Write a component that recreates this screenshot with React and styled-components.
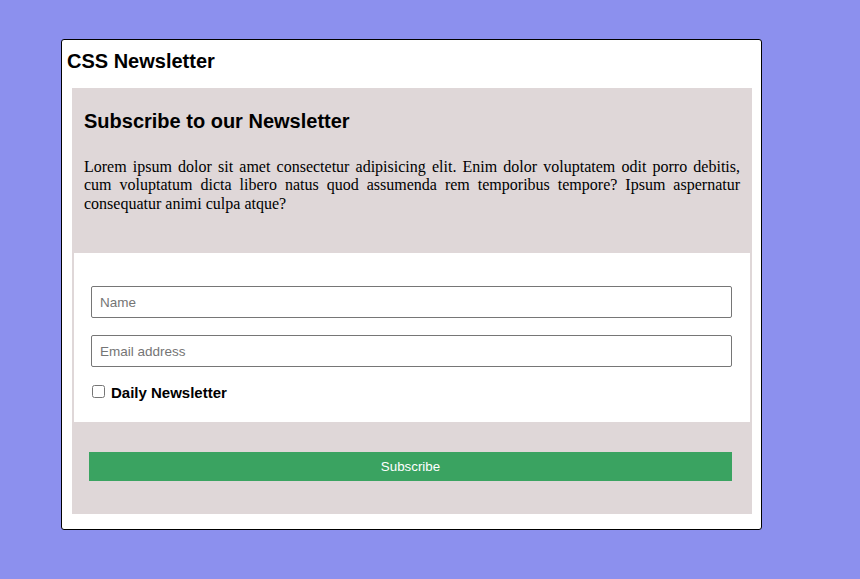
import React from "react";
import styled, { createGlobalStyle } from "styled-components";

const Global = createGlobalStyle`
  html, body {
    margin: 0;
    padding: 0;
    background: #8c90ee;
  }
  body {
    font-family: "Liberation Sans", Arial, sans-serif;
    min-height: 579px;
  }
`;

const Card = styled.div`
  box-sizing: border-box;
  width: 701px;
  margin: 39px 0 0 61px;
  padding: 10px 9px 15px 5px;
  background: #ffffff;
  border: 1px solid #000000;
  border-radius: 3px;
`;

const Title = styled.h2`
  margin: 0 0 15px 0;
  font-family: "Liberation Sans", Arial, sans-serif;
  font-size: 20px;
  font-weight: 700;
  line-height: 23px;
  color: #000;
`;

const Panel = styled.section`
  margin-left: 5px;
  background: #dfd7d8;
  display: flex;
  flex-direction: column;
`;

const Intro = styled.div`
  padding: 22px 12px 40px;
`;

const Heading = styled.h3`
  margin: 0 0 25px;
  font-family: "Liberation Sans", Arial, sans-serif;
  font-size: 20px;
  font-weight: 700;
  line-height: 23px;
  color: #000;
`;

const Text = styled.p`
  margin: 0;
  font-family: "Liberation Serif", "Times New Roman", serif;
  font-size: 16px;
  line-height: 18.4px;
  text-align: justify;
  color: #000;
`;

const Form = styled.div`
  margin: 0 2px;
  background: #ffffff;
  padding: 33px 18px 21px 17px;
  display: flex;
  flex-direction: column;
  gap: 17px;
`;

const Field = styled.input`
  box-sizing: border-box;
  width: 100%;
  height: 32px;
  margin: 0;
  padding: 0 8px;
  border: 1px solid #767676;
  border-radius: 2px;
  font-family: "Liberation Sans", Arial, sans-serif;
  font-size: 13.5px;
  color: #000;
  background: #fff;
  outline: none;
  &::placeholder {
    color: #757575;
  }
`;

const CheckRow = styled.label`
  display: flex;
  align-items: flex-start;
  gap: 6px;
  font-family: "Liberation Sans", Arial, sans-serif;
  font-size: 15px;
  font-weight: 700;
  line-height: 17px;
  color: #000;
`;

const Check = styled.input`
  width: 13px;
  height: 13px;
  margin: 1px 0 0 1px;
`;

const Footer = styled.div`
  padding: 30px 20px 33px 17px;
`;

const Button = styled.button`
  display: block;
  width: 100%;
  height: 29px;
  margin: 0;
  border: none;
  background: #3aa361;
  color: #ffffff;
  font-family: "Liberation Sans", Arial, sans-serif;
  font-size: 13.333px;
  cursor: pointer;
`;

export default function App() {
  return (
    <>
      <Global />
      <Card>
        <Title>CSS Newsletter</Title>
        <Panel>
          <Intro>
            <Heading>Subscribe to our Newsletter</Heading>
            <Text>
              Lorem ipsum dolor sit amet consectetur adipisicing elit. Enim dolor
              voluptatem odit porro debitis, cum voluptatum dicta libero natus quod
              assumenda rem temporibus tempore? Ipsum aspernatur consequatur animi
              culpa atque?
            </Text>
          </Intro>
          <Form>
            <Field type="text" placeholder="Name" />
            <Field type="email" placeholder="Email address" />
            <CheckRow>
              <Check type="checkbox" />
              Daily Newsletter
            </CheckRow>
          </Form>
          <Footer>
            <Button type="button">Subscribe</Button>
          </Footer>
        </Panel>
      </Card>
    </>
  );
}
